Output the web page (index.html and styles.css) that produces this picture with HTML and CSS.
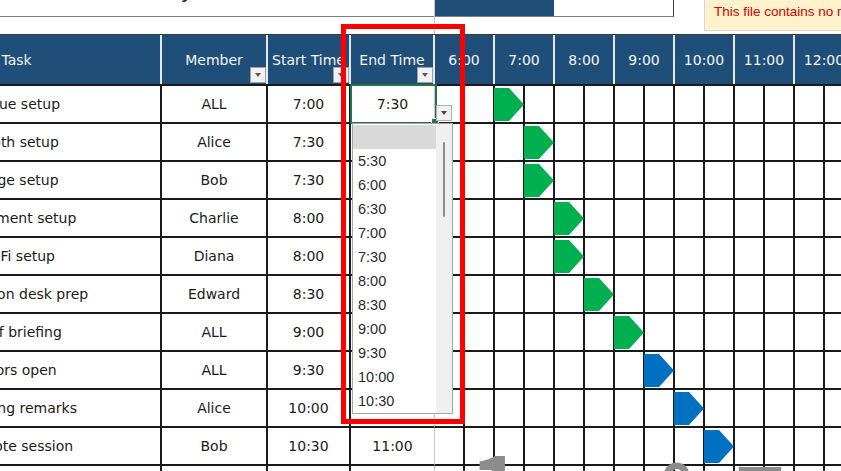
FILE: index.html
```html
<!DOCTYPE html>
<html lang="en">
<head>
<meta charset="utf-8">
<title>Event Timetable</title>
<link rel="stylesheet" href="styles.css">
</head>
<body>
<div class="sheet">
  <div class="top">
    <div class="title-area"><div class="title-line"><span class="title">Event Day</span></div></div>
    <div class="navy-cell"></div>
    <div class="white-box"></div>
    <div class="note"><div class="note-line">This file contains no macros.</div></div>
  </div>

  <div class="grid head">
    <div class="hc">Task</div>
    <div class="hc">Member<span class="filter"></span></div>
    <div class="hc">Start Time<span class="filter"></span></div>
    <div class="hc">End Time<span class="filter"></span></div>
    <div class="hc hour">6:00</div>
    <div class="hc hour">7:00</div>
    <div class="hc hour">8:00</div>
    <div class="hc hour">9:00</div>
    <div class="hc hour">10:00</div>
    <div class="hc hour">11:00</div>
    <div class="hc hour">12:00</div>
  </div>

  <div class="grid row">
    <div class="c">Venue setup</div><div class="c">ALL</div><div class="c">7:00</div><div class="c et">7:30</div>
    <div class="c h"></div><div class="c h"></div><div class="c h"><svg class="arrow green" viewBox="0 0 30 33"><polygon points="0,0 15,0 30,16.5 15,33 0,33"/></svg></div><div class="c h"></div><div class="c h"></div><div class="c h"></div><div class="c h"></div><div class="c h"></div><div class="c h"></div><div class="c h"></div><div class="c h"></div><div class="c h"></div><div class="c h"></div><div class="c h"></div>
  </div>
  <div class="grid row">
    <div class="c">Booth setup</div><div class="c">Alice</div><div class="c">7:30</div><div class="c et">8:00</div>
    <div class="c h"></div><div class="c h"></div><div class="c h"></div><div class="c h"><svg class="arrow green" viewBox="0 0 30 33"><polygon points="0,0 15,0 30,16.5 15,33 0,33"/></svg></div><div class="c h"></div><div class="c h"></div><div class="c h"></div><div class="c h"></div><div class="c h"></div><div class="c h"></div><div class="c h"></div><div class="c h"></div><div class="c h"></div><div class="c h"></div>
  </div>
  <div class="grid row">
    <div class="c">Stage setup</div><div class="c">Bob</div><div class="c">7:30</div><div class="c et">8:00</div>
    <div class="c h"></div><div class="c h"></div><div class="c h"></div><div class="c h"><svg class="arrow green" viewBox="0 0 30 33"><polygon points="0,0 15,0 30,16.5 15,33 0,33"/></svg></div><div class="c h"></div><div class="c h"></div><div class="c h"></div><div class="c h"></div><div class="c h"></div><div class="c h"></div><div class="c h"></div><div class="c h"></div><div class="c h"></div><div class="c h"></div>
  </div>
  <div class="grid row">
    <div class="c">Equipment setup</div><div class="c">Charlie</div><div class="c">8:00</div><div class="c et">8:30</div>
    <div class="c h"></div><div class="c h"></div><div class="c h"></div><div class="c h"></div><div class="c h"><svg class="arrow green" viewBox="0 0 30 33"><polygon points="0,0 15,0 30,16.5 15,33 0,33"/></svg></div><div class="c h"></div><div class="c h"></div><div class="c h"></div><div class="c h"></div><div class="c h"></div><div class="c h"></div><div class="c h"></div><div class="c h"></div><div class="c h"></div>
  </div>
  <div class="grid row">
    <div class="c">Wi-Fi setup</div><div class="c">Diana</div><div class="c">8:00</div><div class="c et">8:30</div>
    <div class="c h"></div><div class="c h"></div><div class="c h"></div><div class="c h"></div><div class="c h"><svg class="arrow green" viewBox="0 0 30 33"><polygon points="0,0 15,0 30,16.5 15,33 0,33"/></svg></div><div class="c h"></div><div class="c h"></div><div class="c h"></div><div class="c h"></div><div class="c h"></div><div class="c h"></div><div class="c h"></div><div class="c h"></div><div class="c h"></div>
  </div>
  <div class="grid row">
    <div class="c">Reception desk prep</div><div class="c">Edward</div><div class="c">8:30</div><div class="c et">9:00</div>
    <div class="c h"></div><div class="c h"></div><div class="c h"></div><div class="c h"></div><div class="c h"></div><div class="c h"><svg class="arrow green" viewBox="0 0 30 33"><polygon points="0,0 15,0 30,16.5 15,33 0,33"/></svg></div><div class="c h"></div><div class="c h"></div><div class="c h"></div><div class="c h"></div><div class="c h"></div><div class="c h"></div><div class="c h"></div><div class="c h"></div>
  </div>
  <div class="grid row">
    <div class="c">Staff briefing</div><div class="c">ALL</div><div class="c">9:00</div><div class="c et">9:30</div>
    <div class="c h"></div><div class="c h"></div><div class="c h"></div><div class="c h"></div><div class="c h"></div><div class="c h"></div><div class="c h"><svg class="arrow green" viewBox="0 0 30 33"><polygon points="0,0 15,0 30,16.5 15,33 0,33"/></svg></div><div class="c h"></div><div class="c h"></div><div class="c h"></div><div class="c h"></div><div class="c h"></div><div class="c h"></div><div class="c h"></div>
  </div>
  <div class="grid row">
    <div class="c">Doors open</div><div class="c">ALL</div><div class="c">9:30</div><div class="c et">10:00</div>
    <div class="c h"></div><div class="c h"></div><div class="c h"></div><div class="c h"></div><div class="c h"></div><div class="c h"></div><div class="c h"></div><div class="c h"><svg class="arrow blue" viewBox="0 0 30 33"><polygon points="0,0 15,0 30,16.5 15,33 0,33"/></svg></div><div class="c h"></div><div class="c h"></div><div class="c h"></div><div class="c h"></div><div class="c h"></div><div class="c h"></div>
  </div>
  <div class="grid row">
    <div class="c">Opening remarks</div><div class="c">Alice</div><div class="c">10:00</div><div class="c et">10:30</div>
    <div class="c h"></div><div class="c h"></div><div class="c h"></div><div class="c h"></div><div class="c h"></div><div class="c h"></div><div class="c h"></div><div class="c h"></div><div class="c h"><svg class="arrow blue" viewBox="0 0 30 33"><polygon points="0,0 15,0 30,16.5 15,33 0,33"/></svg></div><div class="c h"></div><div class="c h"></div><div class="c h"></div><div class="c h"></div><div class="c h"></div>
  </div>
  <div class="grid row">
    <div class="c">Keynote session</div><div class="c">Bob</div><div class="c">10:30</div><div class="c et">11:00</div>
    <div class="c h"></div><div class="c h"></div><div class="c h"></div><div class="c h"></div><div class="c h"></div><div class="c h"></div><div class="c h"></div><div class="c h"></div><div class="c h"></div><div class="c h"><svg class="arrow blue" viewBox="0 0 30 33"><polygon points="0,0 15,0 30,16.5 15,33 0,33"/></svg></div><div class="c h"></div><div class="c h"></div><div class="c h"></div><div class="c h"></div>
  </div>
  <div class="grid row">
    <div class="c"></div><div class="c"></div><div class="c"></div><div class="c et"></div>
    <div class="c h"></div><div class="c h"></div><div class="c h"></div><div class="c h"></div><div class="c h"></div><div class="c h"></div><div class="c h"></div><div class="c h"></div><div class="c h"></div><div class="c h"></div><div class="c h"></div><div class="c h"></div><div class="c h"></div><div class="c h"></div>
  </div>

  <div class="wm"><span class="wm-one">1</span><span class="wm-pe">ペ</span><span class="wm-bar">ー</span></div>

  <div class="active"><span class="handle"></span></div>
  <div class="dd-btn"></div>
  <div class="dd-list">
    <div class="dd-items">
      <div class="dd-item sel"></div>
      <div class="dd-item">5:30</div>
      <div class="dd-item">6:00</div>
      <div class="dd-item">6:30</div>
      <div class="dd-item">7:00</div>
      <div class="dd-item">7:30</div>
      <div class="dd-item">8:00</div>
      <div class="dd-item">8:30</div>
      <div class="dd-item">9:00</div>
      <div class="dd-item">9:30</div>
      <div class="dd-item">10:00</div>
      <div class="dd-item">10:30</div>
    </div>
    <div class="dd-track"><div class="dd-thumb"></div></div>
  </div>
  <div class="red-frame"></div>
</div>
</body>
</html>
```

FILE: styles.css
```css
html, body {
  margin: 0;
  width: 841px;
  height: 471px;
  overflow: hidden;
  background: #fff;
}
body {
  font-family: "DejaVu Sans", Verdana, sans-serif;
  font-size: 14px;
  color: #1a1a1a;
}
.sheet {
  position: relative;
  width: 841px;
  height: 471px;
  overflow: hidden;
}

/* top strip */
.top {
  display: flex;
  align-items: flex-start;
  height: 34px;
}
.title-area {
  flex: none;
  width: 435px;
  height: 34px;
  border-right: 1px solid #c8c8c8;
  box-sizing: border-box;
}
.title-line {
  height: 17px;
  border-bottom: 1px solid #808080;
  box-sizing: border-box;
  overflow: hidden;
  padding-left: 80px;
}
.title {
  display: block;
  font-size: 22px;
  line-height: 22px;
  margin-top: -20px;
  color: #222;
}
.navy-cell {
  flex: none;
  width: 119px;
  height: 17px;
  background: #1f4e78;
  border-bottom: 1px solid #808080;
  box-sizing: border-box;
}
.white-box {
  flex: none;
  width: 120px;
  height: 17px;
  border-right: 1px solid #404040;
  border-bottom: 1px solid #808080;
  box-sizing: border-box;
}
.note {
  flex: 1;
  margin-left: 30px;
  height: 31px;
  background: #fff2cc;
  border: 1px solid #d6d6d6;
  border-top: 0;
  border-right: 0;
  box-sizing: border-box;
  padding: 4px 0 0 9px;
  font-family: "Liberation Sans", Arial, sans-serif;
  font-size: 13.5px;
  line-height: 15px;
  color: #d40000;
  white-space: nowrap;
  overflow: hidden;
}

/* table grid */
.grid {
  display: grid;
  grid-template-columns: 289px 106px 83px 84px repeat(14, 30px);
  width: max-content;
  margin-left: -127px;
}
.head {
  background: #1f4e78;
  border-top: 1px solid #3a3a3a;
  border-bottom: 2px solid #1a1a1a;
}
.hc {
  position: relative;
  height: 49px;
  display: flex;
  align-items: center;
  justify-content: center;
  color: #f2f4f7;
  border-right: 2px solid #e4e9ef;
  box-sizing: border-box;
  white-space: nowrap;
}
.hour {
  grid-column: span 2;
}
.filter {
  position: absolute;
  right: 0;
  bottom: 1px;
  width: 16px;
  height: 16px;
  background: #f2f2f2;
  border: 1px solid #a0a0a0;
  box-sizing: border-box;
  display: flex;
  align-items: center;
  justify-content: center;
}
.filter::after {
  content: "";
  border-left: 3.5px solid transparent;
  border-right: 3.5px solid transparent;
  border-top: 4px solid #5a5a5a;
}

.row .c {
  height: 38px;
  display: flex;
  align-items: center;
  justify-content: center;
  border-right: 2px solid #1a1a1a;
  border-bottom: 2px solid #1a1a1a;
  box-sizing: border-box;
  white-space: nowrap;
}
.row .et {
  border-right: 1px solid #c8c8c8;
}
.row .h {
  position: relative;
}
.arrow {
  position: absolute;
  left: -1px;
  top: 2px;
  width: 30px;
  height: 33px;
}
.green { fill: #00b050; }
.blue { fill: #0070c0; }

/* page watermark */
.wm {
  position: absolute;
  left: 470px;
  top: 430px;
  display: flex;
  align-items: flex-start;
  font-family: "Noto Sans CJK JP", sans-serif;
  font-weight: 700;
  color: #8c8c8c;
  white-space: nowrap;
}
.wm-one {
  font-size: 90px;
  line-height: 90px;
  margin-top: 7px;
}
.wm-pe {
  font-size: 100px;
  line-height: 100px;
  margin-top: 14px;
  margin-left: 75px;
}
.wm-bar {
  font-size: 52px;
  line-height: 52px;
  margin-top: 13px;
  margin-left: 36px;
}

/* active cell + dropdown */
.active {
  position: absolute;
  left: 350px;
  top: 84px;
  width: 87px;
  height: 40px;
  border: 2px solid #217346;
  box-sizing: border-box;
}
.handle {
  position: absolute;
  right: -4px;
  bottom: -4px;
  width: 6px;
  height: 6px;
  background: #217346;
  border: 1px solid #fff;
}
.dd-btn {
  position: absolute;
  left: 436px;
  top: 105px;
  width: 16px;
  height: 16px;
  background: #f0f0f0;
  border: 1px solid #b0b0b0;
  box-sizing: border-box;
  display: flex;
  align-items: center;
  justify-content: center;
}
.dd-btn::after {
  content: "";
  border-left: 3.5px solid transparent;
  border-right: 3.5px solid transparent;
  border-top: 4px solid #444;
}
.dd-list {
  position: absolute;
  left: 352px;
  top: 123px;
  width: 101px;
  height: 291px;
  border: 1px solid #a6a6a6;
  box-sizing: border-box;
  background: #fff;
  display: flex;
  font-family: "Liberation Sans", Arial, sans-serif;
  font-size: 14.5px;
  color: #2b2b2b;
}
.dd-items {
  width: 83px;
  padding-top: 1px;
}
.dd-item {
  height: 24px;
  display: flex;
  align-items: center;
  padding-left: 5px;
}
.dd-item.sel {
  background: #d9d9d9;
}
.dd-track {
  flex: 1;
  background: #f0f0f0;
  padding-top: 18px;
  display: flex;
  justify-content: center;
  align-items: flex-start;
}
.dd-thumb {
  width: 2px;
  height: 75px;
  background: #8c8c8c;
  border-radius: 1px;
}
.red-frame {
  position: absolute;
  left: 341px;
  top: 24px;
  width: 124px;
  height: 400px;
  border: 5px solid #ff0000;
  box-sizing: border-box;
}
```
